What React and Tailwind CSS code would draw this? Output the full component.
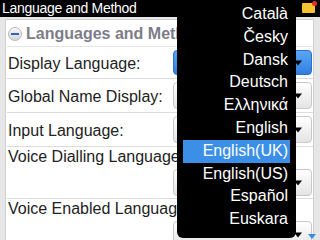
import React from 'react'

const langs = ['Català', 'Česky', 'Dansk', 'Deutsch', 'Ελληνικά', 'English', 'English(UK)', 'English(US)', 'Español', 'Euskara']

function Arrow() {
  return <span className="absolute right-[9px] top-1/2 -translate-y-1/2 w-0 h-0 border-l-[4px] border-r-[4px] border-t-[5px] border-l-transparent border-r-transparent border-t-black" />
}

function Select({ active }) {
  return (
    <div
      className={
        active
          ? 'relative ml-auto w-[139px] h-[25px] rounded-[4px] bg-gradient-to-b from-[#5aa6f5] to-[#2f7fe0] border border-[#2a6fc8]'
          : 'relative ml-auto w-[139px] h-[27px] rounded-[4px] bg-gradient-to-b from-[#ffffff] to-[#e4e4e4] border border-[#c8c8c8]'
      }
    >
      <Arrow />
    </div>
  )
}

function Row({ label, active, tall, h = 'h-[34px]' }) {
  if (tall) {
    return (
      <div className="h-[52px] border-b border-[#dcdcdc] pt-[1px] pr-[1px]">
        <div className="text-[16px] leading-[18px] text-[#222] pl-[1px] whitespace-nowrap">{label}</div>
        <div className="mt-[3px]"><Select /></div>
      </div>
    )
  }
  return (
    <div className={`${h} border-b border-[#dcdcdc] flex items-center pr-[1px]`}>
      <span className="text-[16px] text-[#222] pl-[1px] pt-[2px] whitespace-nowrap">{label}</span>
      <Select active={active} />
    </div>
  )
}

export default function App() {
  return (
    <div className="relative w-[320px] h-[240px] overflow-hidden bg-[#e6e6e6] font-['Liberation_Sans',sans-serif]">
      {/* title bar */}
      <div className="h-[17px] bg-black text-white text-[14px] leading-[17px] pl-[2px] flex justify-between">
        <span className="tracking-[-0.3px]">Language and Method</span>
        <span className="relative mr-[5px] mt-[3px] w-[13px] h-[10px] bg-[#f4c430] rounded-[1px]">
          <span className="absolute -top-[2px] -right-[2px] w-[5px] h-[5px] rounded-full bg-[#e53030]" />
        </span>
      </div>

      {/* panel */}
      <div className="ml-[5px] mr-[6px] mt-[2px] h-[240px] bg-white border-l border-r border-t border-[#d0d0d0] pl-[1px]">
        <div className="h-[27px] flex items-center gap-[4px] border-b border-[#e4e4e4] pt-[2px]">
          <span className="ml-[1px] w-[14px] h-[14px] rounded-full bg-gradient-to-b from-[#f7f7f7] to-[#d6d6d6] border border-[#b8b8b8] flex items-center justify-center">
            <span className="w-[8px] h-[2px] bg-[#3060c0]" />
          </span>
          <span className="text-[16px] font-bold text-[#7c7c88] whitespace-nowrap">Languages and Method</span>
        </div>
        <Row label="Display Language:" active h="h-[32px]" />
        <Row label="Global Name Display:" />
        <Row label="Input Language:" />
        <Row label="Voice Dialling Language:" tall />
        <Row label="Voice Enabled Language:" tall />
      </div>

      {/* scroll hint */}
      <span className="absolute right-[4px] bottom-[1px] w-0 h-0 border-l-[4px] border-r-[4px] border-t-[5px] border-l-transparent border-r-transparent border-t-[#3b8de0]" />

      {/* dropdown menu */}
      <div className="absolute top-0 left-[177px] w-[119px] h-[238px] bg-black rounded-b-[6px] pt-[3px] px-[6px] text-white text-[16px]">
        {langs.map(l => (
          <div
            key={l}
            className={`h-[22.8px] leading-[22.8px] text-right pr-[2px] whitespace-nowrap ${l === 'English(UK)' ? 'bg-[#3c8fe6]' : ''}`}
          >
            {l}
          </div>
        ))}
      </div>
    </div>
  )
}
